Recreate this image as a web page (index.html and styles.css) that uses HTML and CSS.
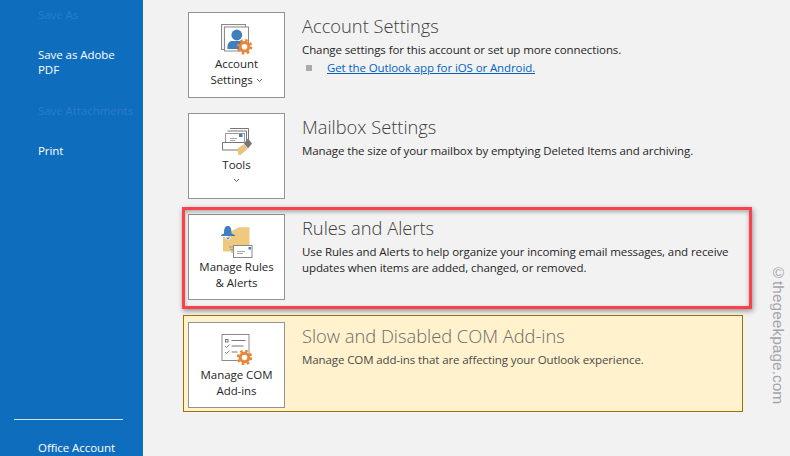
FILE: index.html
```html
<!DOCTYPE html>
<html lang="en">
<head>
<meta charset="utf-8">
<title>Outlook Account Information</title>
<link rel="stylesheet" href="styles.css">
</head>
<body>
<div class="app">
  <nav class="side">
    <div class="nav nav-first off">Save As</div>
    <div class="nav nav-pdf">Save as Adobe<br>PDF</div>
    <div class="nav nav-att off">Save Attachments</div>
    <div class="nav nav-print">Print</div>
    <div class="side-foot">
      <div class="rule"></div>
      <div class="nav nav-acct">Office Account</div>
    </div>
  </nav>
  <main class="content">
    <section class="row">
      <div class="tile">
        <svg class="ico" width="32" height="32" viewBox="0 0 32 32">
          <rect x="0.5" y="0.5" width="24" height="25" fill="#f4f4f4" stroke="#8a8a8a"/>
          <rect x="3.5" y="3" width="24" height="24" fill="#fff" stroke="#8a8a8a"/>
          <circle cx="15.800" cy="11" r="5.400" fill="#3f7fbf"/>
          <path d="M6.500 25v-2.500c0-3.500 2.500-5.500 5-5.500h7c2.500 0 4 2 4 5.500v2.500z" fill="#3f7fbf"/>
          <circle cx="23.500" cy="22.800" r="6.300" fill="none" stroke="#e8873a" stroke-width="3" stroke-dasharray="2.470 2.470"/>
          <circle cx="23.500" cy="22.800" r="4.300" fill="#fff" stroke="#e8873a" stroke-width="3"/>
        </svg>
        <div class="lbl">Account<br>Settings <span class="chev-in"><svg width="7" height="5" viewBox="0 0 7 5"><path d="M1 1l2.500 2.500L6 1" fill="none" stroke="#666"/></svg></span></div>
      </div>
      <div class="info">
        <h2 class="ttl">Account Settings</h2>
        <p class="dsc">Change settings for this account or set up more connections.</p>
        <div class="lnk-row"><span class="sq"></span><a class="lnk" href="#">Get the Outlook app for iOS or Android.</a></div>
      </div>
    </section>
    <section class="row">
      <div class="tile">
        <svg class="ico" width="32" height="32" viewBox="0 0 32 32">
          <path d="M9 3.500h18.500v13" fill="none" stroke="#777"/>
          <path d="M6.500 6h19v12" fill="none" stroke="#777"/>
          <rect x="4.500" y="8.500" width="19" height="9" fill="#fff" stroke="#999"/>
          <rect x="18" y="9" width="3.500" height="3" fill="#3f7fbf"/>
          <path d="M9 13.500h7M9 15.500h5" stroke="#aaa"/>
          <path d="M1.500 17.500h22M1.500 17.500v7.500h16" fill="none" stroke="#777"/>
          <path d="M16 24l7-5 3.500 5-7 6h-2z" fill="#e9c27f"/>
          <path d="M23 18.500l4-5 4 5-4 5z" fill="#777"/>
        </svg>
        <div class="lbl">Tools</div>
        <svg class="chev" width="7" height="5" viewBox="0 0 7 5"><path d="M1 1l2.500 2.500L6 1" fill="none" stroke="#666"/></svg>
      </div>
      <div class="info">
        <h2 class="ttl">Mailbox Settings</h2>
        <p class="dsc">Manage the size of your mailbox by emptying Deleted Items and archiving.</p>
      </div>
    </section>
    <section class="row row-marked">
      <div class="tile">
        <svg class="ico" width="32" height="33" viewBox="0 0 32 33">
          <path d="M2 11H7L9.500 5.700 17.800 1.300H28.500V25.500H2z" fill="#efc97f"/>
          <path d="M3 7.500C3 1.500 4.500 0 6.800 0S10.500 1.500 10.500 7.500l3.500 1.500v1H0V9z" fill="#3f7fbf"/>
          <path d="M4 11h6v1l-3 2.500-3-2.500z" fill="#fff"/>
          <path d="M5 11.500h4l-2 2.300z" fill="#3f7fbf"/>
          <path d="M8 21h4M9 23.500h3M10 26h2" stroke="#999"/>
          <rect x="12.500" y="19.500" width="18.500" height="12" fill="#fff" stroke="#8a8a8a"/>
          <rect x="27.500" y="21" width="2.500" height="2.500" fill="#3f7fbf"/>
          <path d="M16 25.500h8M16 27.500h6" stroke="#aaa"/>
        </svg>
        <div class="lbl">Manage Rules<br>&amp; Alerts</div>
      </div>
      <div class="info">
        <h2 class="ttl">Rules and Alerts</h2>
        <p class="dsc">Use Rules and Alerts to help organize your incoming email messages, and receive<br>updates when items are added, changed, or removed.</p>
      </div>
      <div class="mark"></div>
    </section>
    <section class="panel">
      <div class="tile">
        <svg class="ico" width="32" height="33" viewBox="0 0 32 33">
          <rect x="1" y="0.500" width="27" height="26" fill="#fff" stroke="#8a8a8a"/>
          <rect x="4.500" y="5.500" width="2.500" height="2.500" fill="none" stroke="#777"/>
          <path d="M10.500 6.500h14M10.500 12h12M10.500 18h6" stroke="#777"/>
          <path d="M4 12l1.500 1.500L8.500 10.500M4 18l1.500 1.500L8.500 16.500" fill="none" stroke="#6f8f5f"/>
          <circle cx="23.500" cy="23.500" r="6.300" fill="none" stroke="#e8873a" stroke-width="3" stroke-dasharray="2.470 2.470"/>
          <circle cx="23.500" cy="23.500" r="4.300" fill="#fff" stroke="#e8873a" stroke-width="3"/>
        </svg>
        <div class="lbl">Manage COM<br>Add-ins</div>
      </div>
      <div class="info">
        <h2 class="ttl ttl-dim">Slow and Disabled COM Add-ins</h2>
        <p class="dsc dsc-dim">Manage COM add-ins that are affecting your Outlook experience.</p>
      </div>
    </section>
  </main>
  <div class="mark-text">©thegeekpage.com</div>
</div>
</body>
</html>
```
FILE: styles.css
```css
* { box-sizing: border-box; }
html, body { margin: 0; padding: 0; }
body { width: 790px; height: 456px; overflow: hidden; font-family: "Open Sans", "Noto Sans", sans-serif; background: #f2f2f2; }
.app { position: relative; display: flex; width: 790px; height: 456px; overflow: hidden; }

.side { width: 143px; flex: none; height: 456px; background: #0f6dbd; display: flex; flex-direction: column; padding-top: 7px; color: #fff; }
.nav { padding-left: 38px; font-size: 11.5px; line-height: 16px; letter-spacing: -0.06px; white-space: nowrap; }
.off { color: #2b7ccb; }
.nav-pdf { margin-top: 24px; line-height: 15px; }
.nav-att { margin-top: 26px; }
.nav-print { margin-top: 24px; }
.side-foot { margin-top: auto; height: 37px; }
.rule { width: 109px; height: 1px; margin-left: 14px; background: #cfe3f5; }
.nav-acct { margin-top: 20px; }

.content { flex: 1; padding-top: 12px; display: flex; flex-direction: column; }
.row { position: relative; display: flex; margin-left: 45px; margin-bottom: 15px; width: 560px; }
.tile { width: 97px; height: 86px; flex: none; background: #fff; border: 1px solid #939393; padding-top: 11px; display: flex; flex-direction: column; align-items: center; }
.ico { display: block; flex: none; }
.lbl { font-size: 11.5px; line-height: 16px; letter-spacing: -0.05px; text-align: center; color: #262626; }
.chev { display: block; margin-top: 5px; }
.chev-in svg { vertical-align: 1px; }

.info { padding-left: 17px; padding-top: 2px; flex: 1; min-width: 0; }
.ttl { margin: 0 0 4px; font-size: 18.3px; line-height: 24px; font-weight: 300; color: #404040; white-space: nowrap; }
.dsc { margin: 0; font-size: 11.5px; line-height: 16px; letter-spacing: -0.1px; color: #262626; white-space: nowrap; }
.ttl-dim { color: #6a6a6a; }
.dsc-dim { color: #4a4a4a; }
.lnk-row { display: flex; align-items: center; margin-top: 2px; height: 16px; }
.sq { width: 6px; height: 6px; margin-left: 4px; margin-right: 15px; background: #aaa; }
.lnk { font-size: 11.5px; line-height: 16px; letter-spacing: -0.1px; color: #0563c1; text-decoration: underline; white-space: nowrap; }

.panel { display: flex; width: 560px; height: 97px; margin-left: 40px; padding: 6px 4px; background: #fff2cc; border: 1px solid #a07000; }

.mark { position: absolute; left: -6px; top: -7px; width: 570px; height: 102px; border: 3px solid #fb414b; box-shadow: 1px 2px 5px rgba(0,0,0,.4), inset 0 2px 4px rgba(0,0,0,.3); pointer-events: none; }
.mark-text { position: absolute; left: 769px; top: 264px; writing-mode: vertical-rl; font-family: "Liberation Sans", sans-serif; font-size: 15.5px; line-height: 18px; color: #a5a3ad; white-space: nowrap; }
```
